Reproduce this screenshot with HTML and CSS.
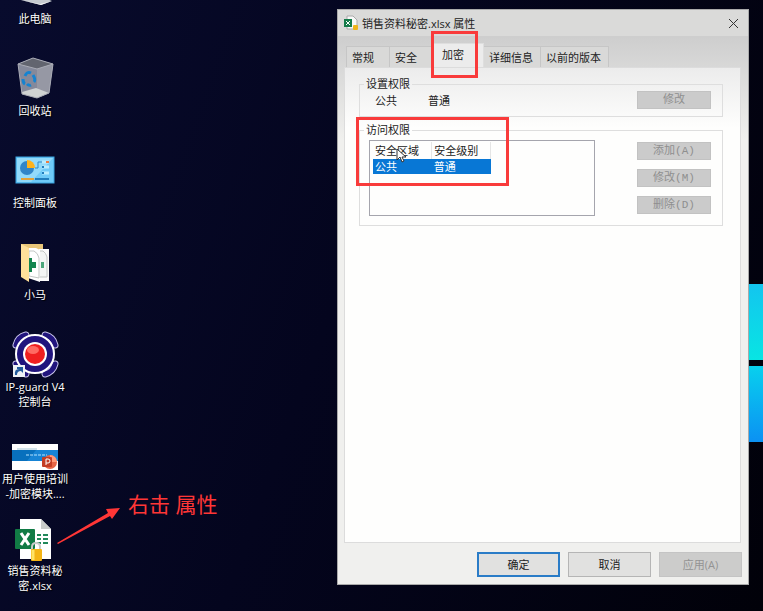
FILE: index.html
```html
<!DOCTYPE html>
<html lang="zh-CN">
<head>
    <meta charset="UTF-8">
    <title>销售资料秘密.xlsx 属性</title>
    <link rel="stylesheet" href="styles.css">
</head>
<body>
    <main class="desktop">
        <div class="wallpaper">
            <div class="wallpaper__pane"></div>
            <div class="wallpaper__pane wallpaper__pane--low"></div>
        </div>

        <div class="icons">
            <div class="icon">
                <svg class="icon__image" width="48" height="48" viewBox="0 0 48 48">
                    <path d="M10 40l16-5 15 6-11 4z" fill="#c6cbd0"/>
                    <path d="M10 40l20 5 11-4-12 3z" fill="#f3f3f3"/>
                </svg>
                <span class="icon__label">此电脑</span>
            </div>
            <div class="icon">
                <svg class="icon__image" width="48" height="48" viewBox="0 0 48 48">
                    <path d="M7 12L22 6l20 6-4 29-12 5-15-4z" fill="#85899a"/>
                    <path d="M7 12L22 6l20 6-16 5z" fill="#62656f"/>
                    <path d="M26 17l16-5-4 29-12 5z" fill="#9698a4"/>
                    <path d="M11 40l14-4 13 5-12 5-15-4z" fill="#d0d3d3"/>
                    <path d="M7 12L22 6l20 6-4 29-12 5-15-4zM7 12l19 5 16-5" fill="none" stroke="#a9abb5"/>
                    <g fill="none" stroke="#1583d1" stroke-width="3">
                        <path d="M14 24q2-5 6-3"/>
                        <path d="M22 23q3 5 1 7"/>
                        <path d="M20 33q-2 1-4-1"/>
                        <path d="M12 27q0 4 2 5"/>
                    </g>
                </svg>
                <span class="icon__label">回收站</span>
            </div>
            <div class="icon">
                <svg class="icon__image" width="48" height="48" viewBox="0 0 48 48">
                    <rect x="5" y="13" width="38" height="26" fill="#6fcaf8" stroke="#3ba4df"/>
                    <path d="M6 14h36L20 38H6z" fill="#92dafa"/>
                    <circle cx="16" cy="24" r="7" fill="#3186c8"/>
                    <path d="M16 24v-8a8 8 0 0 1 8 8z" fill="#ffb31a"/>
                    <path d="M24 24h3v-6h5" fill="none" stroke="#3189c5"/>
                    <path d="M31 18h7M31 23h7M31 29h7" stroke="#b9ecff" stroke-width="3"/>
                    <path d="M35 18h3" stroke="#ef7d42" stroke-width="2"/>
                    <path d="M31 23h2M31 29h2M24 35h14" stroke="#217dbd" stroke-width="2"/>
                    <path d="M10 35h13" stroke="#e3a33a" stroke-width="2"/>
                </svg>
                <span class="icon__label">控制面板</span>
            </div>
            <div class="icon">
                <svg class="icon__image" width="48" height="48" viewBox="0 0 48 48">
                    <path d="M10 8h22v32H10z" fill="#e9c679"/>
                    <path d="M28 13h10v32H28z" fill="#fbfbfb"/>
                    <path d="M28 15h4q3 2 4 6v20h-8z" fill="#f4f6f5" stroke="#c3c7c5"/>
                    <path d="M30 26h3v6h-3z" fill="#4ba67a"/>
                    <path d="M17 12h8l4 2v32l-12-4z" fill="#fff"/>
                    <path d="M18 15h5q4 2 5 7v20l-10-2z" fill="#fff" stroke="#c3c7c5"/>
                    <path d="M18 22h3v4h4v6h-4v4h-3z" fill="#14854f"/>
                    <path d="M10 8l8 4v34l-8-5z" fill="#ffe09a"/>
                </svg>
                <span class="icon__label">小马</span>
            </div>
            <div class="icon">
                <svg class="icon__image" width="48" height="48" viewBox="0 0 48 48">
                    <g fill="none" stroke-linecap="round">
                        <path d="M5 17Q7 9 15 7M34 7Q42 9 44 17M44 36Q42 44 34 46M15 46Q7 44 5 36" stroke="#c9c5ea" stroke-width="7"/>
                        <path d="M5 17Q7 9 15 7M34 7Q42 9 44 17M44 36Q42 44 34 46M15 46Q7 44 5 36" stroke="#21147d" stroke-width="5"/>
                    </g>
                    <circle cx="24" cy="26" r="19" fill="#21147d" stroke="#fff" stroke-width="2"/>
                    <circle cx="24" cy="26" r="12" fill="#fff"/>
                    <circle cx="24" cy="26" r="10" fill="#f01f20"/>
                    <ellipse cx="22" cy="22" rx="6" ry="4" fill="#ff6a62"/>
                    <path d="M2 37h12v12H2z" fill="#eef2f5"/>
                    <path d="M4 47q-1-6 4-6h-2v-2h6v6l-2-2q-4 0-4 4z" fill="#235b9c"/>
                </svg>
                <span class="icon__label">IP-guard V4 控制台</span>
            </div>
            <div class="icon">
                <svg class="icon__image" width="48" height="48" viewBox="0 0 48 48">
                    <path d="M1 24h46v26H1z" fill="#fff"/>
                    <path d="M1 30h46v11H1z" fill="#1784d5"/>
                    <path d="M1 30h24l-9 11H1z" fill="#0870bd"/>
                    <path d="M15 35h21" stroke="#b8e4ff" stroke-dasharray="3 1"/>
                    <path d="M6 29h20" stroke="#a7c8d7"/>
                    <circle cx="39" cy="42" r="7" fill="#e66546"/>
                    <path d="M39 35a7 7 0 0 1 7 7h-7z" fill="#ff9a78"/>
                    <rect x="31" y="37" width="10" height="10" rx="1" fill="#c33e25"/>
                    <path d="M35 45v-6h2q2 0 2 2t-2 2h-2" fill="none" stroke="#fff"/>
                </svg>
                <span class="icon__label">用户使用培训<wbr>-加密模块....</span>
            </div>
            <div class="icon">
                <svg class="icon__image" width="48" height="48" viewBox="0 0 48 48">
                    <path d="M9 7h21l10 10v30H9z" fill="#fff"/>
                    <path d="M30 7v10h10z" fill="#c9ccca"/>
                    <path d="M26 23h4M32 23h5M26 27h4M32 27h5M26 31h4M32 31h5" stroke="#21885a" stroke-width="2"/>
                    <rect x="4" y="17" width="20" height="20" rx="1" fill="#117b45"/>
                    <path d="M10 21l8 12M18 21l-8 12" stroke="#fff" stroke-width="3"/>
                    <path d="M21 38v-3q0-4 4-4t4 4v3" fill="none" stroke="#cacaca" stroke-width="2"/>
                    <rect x="20" y="37" width="11" height="12" rx="1" fill="#f4b415"/>
                    <path d="M22 38v10" stroke="#ffe466" stroke-width="3"/>
                </svg>
                <span class="icon__label">销售资料秘密.xlsx</span>
            </div>
        </div>

        <div class="note">
            <svg class="note__arrow" width="64" height="38" viewBox="0 0 64 38">
                <path d="M0 36L51 6l-2-4 14-1-8 11-2-3L1 37z" fill="#ff3636"/>
            </svg>
            <span class="note__text">右击 属性</span>
        </div>

        <section class="dialog">
            <header class="dialog__header">
                <svg class="dialog__icon" width="16" height="16" viewBox="0 0 16 16">
                    <path d="M4 1h6l4 4v9H4z" fill="#f8f8f8" stroke="#aaa"/>
                    <rect x="1" y="4" width="8" height="8" fill="#147b49"/>
                    <path d="M3 6l4 4M7 6l-4 4" stroke="#fff"/>
                    <rect x="10" y="10" width="5" height="5" rx="1" fill="#eeb51d"/>
                </svg>
                <h1 class="dialog__title">销售资料秘密.xlsx 属性</h1>
                <button class="dialog__close" type="button" aria-label="关闭">
                    <svg width="11" height="11" viewBox="0 0 11 11">
                        <path d="M1 1l9 9M10 1l-9 9" stroke="#333"/>
                    </svg>
                </button>
            </header>

            <div class="tabs">
                <button class="tabs__item" type="button">常规</button>
                <button class="tabs__item" type="button">安全</button>
                <button class="tabs__item tabs__item--active" type="button">加密</button>
                <button class="tabs__item tabs__item--wide" type="button">详细信息</button>
                <button class="tabs__item tabs__item--widest" type="button">以前的版本</button>
            </div>

            <div class="panel">
                <fieldset class="group">
                    <legend class="group__title">设置权限</legend>
                    <div class="group__row">
                        <span class="group__zone">公共</span>
                        <span class="group__level">普通</span>
                        <button class="small-button" type="button" disabled>修改</button>
                    </div>
                </fieldset>

                <fieldset class="group group--access">
                    <legend class="group__title">访问权限</legend>
                    <div class="access">
                        <div class="access__list">
                            <table class="access__table">
                                <thead>
                                    <tr><th>安全区域</th><th>安全级别</th></tr>
                                </thead>
                                <tbody>
                                    <tr><td>公共</td><td>普通</td></tr>
                                </tbody>
                            </table>
                            <svg class="cursor" width="10" height="15" viewBox="0 0 10 15">
                                <path d="M1 1v11l3-3 2 5 2-1-2-4h4z" fill="#fff" stroke="#333"/>
                            </svg>
                        </div>
                        <div class="access__actions">
                            <button class="small-button" type="button" disabled>添加(A)</button>
                            <button class="small-button" type="button" disabled>修改(M)</button>
                            <button class="small-button" type="button" disabled>删除(D)</button>
                        </div>
                    </div>
                </fieldset>
            </div>

            <footer class="dialog__footer">
                <button class="button button--default" type="button">确定</button>
                <button class="button" type="button">取消</button>
                <button class="button" type="button" disabled>应用(A)</button>
            </footer>
        </section>
    </main>
</body>
</html>
```

FILE: styles.css
```css
*,
*::after {
    box-sizing: border-box;
}

body {
    font-family: "Open Sans", "Noto Sans CJK SC", sans-serif;
    font-size: 11px;
    line-height: 15px;
    margin: 0;
}

button {
    color: inherit;
    font: inherit;
    padding: 0;
}

.desktop {
    background: linear-gradient(110deg, #080b2d 0%, #04051e 45%, #010109 100%);
    display: grid;
    grid-template-columns: 70px 1fr 55%;
    height: 100vh;
    min-height: 500px;
    overflow: hidden;
    padding-right: 14px;
    position: relative;
}

/* lit window panes at the edge of the wallpaper */
.wallpaper {
    display: grid;
    gap: 6px;
    position: absolute;
    right: 0;
    top: 284px;
    width: 14px;
}

.wallpaper__pane {
    background: linear-gradient(#13c5ef, #08e5e3);
    height: 76px;
}

.wallpaper__pane--low {
    background: linear-gradient(#08d0ee, #0b91f3);
}

.icons {
    display: grid;
    grid-auto-rows: 92px;
    margin-top: -40px;
}

.icon {
    align-items: center;
    display: flex;
    flex-direction: column;
    gap: 3px;
}

.icon__image {
    flex: none;
    overflow: visible;
}

.icon__label {
    color: #fff;
    max-width: 68px;
    text-align: center;
    text-shadow: 1px 1px 1px #000;
}

.note {
    position: relative;
}

.note__arrow {
    left: -13px;
    position: absolute;
    top: 507px;
}

.note__text {
    color: #ff3636;
    font-size: 21px;
    left: 58px;
    line-height: 30px;
    position: absolute;
    top: 489px;
    white-space: nowrap;
}

.dialog {
    background: linear-gradient(#cecece 27px, #f0f0ee 130px);
    border: 1px solid #aaa;
    color: #222;
    display: flex;
    flex-direction: column;
    margin: 9px 0 26px;
    position: relative;
}

.dialog__header {
    align-items: center;
    background: #dadad9;
    display: flex;
    gap: 3px;
    height: 26px;
    padding: 0 9px 0 5px;
}

.dialog__title {
    flex: 1;
    font-size: 11px;
    font-weight: 400;
    margin: 0;
}

.dialog__close {
    background: none;
    border: 0;
    display: flex;
}

.tabs {
    align-items: flex-end;
    display: flex;
    margin-top: 7px;
    padding-left: 8px;
}

.tabs__item {
    background: #d9d9d8;
    border: 1px solid #c6c6c6;
    border-width: 1px 1px 0 0;
    height: 21px;
    padding-left: 5px;
    text-align: left;
    width: 44px;
}

.tabs__item:first-child {
    border-left-width: 1px;
}

.tabs__item--active {
    background: #ececec;
    border-color: #dedede;
    height: 24px;
    padding-bottom: 3px;
    padding-left: 8px;
    position: relative;
    width: 50px;
}

.tabs__item--wide {
    width: 57px;
}

.tabs__item--widest {
    width: 68px;
}

/* red marker frames drawn over the dialog */
.tabs__item--active::after,
.group--access::after {
    border: 3px solid #f93b3b;
    content: "";
    pointer-events: none;
    position: absolute;
}

.tabs__item--active::after {
    height: 47px;
    left: -3px;
    top: -13px;
    width: 47px;
}

.group--access::after {
    height: 69px;
    left: -4px;
    top: -20px;
    width: 153px;
}

.panel {
    background: linear-gradient(#ececec, #fefefd 60px);
    border: 1px solid #dcdcdc;
    flex: 1;
    margin: 0 7px 0 6px;
    padding: 9px 17px 0 14px;
}

.group {
    border: 1px solid #dedede;
    margin: 0 0 6px;
    min-width: 0;
    padding: 0 11px 7px 9px;
    position: relative;
}

.group--access {
    padding-bottom: 9px;
}

.group__title {
    line-height: 14px;
    margin-left: -5px;
    padding: 0 2px;
}

.group__row {
    align-items: center;
    display: flex;
    padding-left: 6px;
}

.group__zone {
    width: 53px;
}

.group__level {
    flex: 1;
}

.small-button {
    background: #cbcbcb;
    border: 1px solid #c2c2c2;
    color: #8f8f8f;
    font-family: "Liberation Mono", "Noto Sans CJK SC", monospace;
    height: 18px;
    line-height: 15px;
    width: 74px;
}

.access {
    display: flex;
    gap: 42px;
    padding-top: 3px;
}

.access__list {
    border: 1px solid #a5a5ad;
    flex: 1;
    height: 76px;
    padding: 1px 3px;
    position: relative;
}

.access__table {
    border-collapse: collapse;
    line-height: 15px;
    table-layout: fixed;
    width: 118px;
}

.access__table th,
.access__table td {
    font-weight: 400;
    padding: 0 0 0 2px;
    text-align: left;
}

.access__table th {
    border-right: 1px solid #e5e5e5;
    line-height: 17px;
}

.access__table td {
    background: #0877d5;
    color: #fff;
}

.cursor {
    left: 26px;
    position: absolute;
    top: 7px;
}

.access__actions {
    display: flex;
    flex-direction: column;
    gap: 9px;
    padding-top: 2px;
}

.dialog__footer {
    display: flex;
    gap: 8px;
    justify-content: flex-end;
    padding: 9px 6px 7px;
}

.button {
    background: #e1e1e0;
    border: 1px solid #b5b5b5;
    height: 25px;
    width: 83px;
}

.button--default {
    border: 2px solid #2a7cc7;
}

.button:disabled {
    background: #cccccb;
    border-color: #c4c4c4;
    color: #939393;
}
```
